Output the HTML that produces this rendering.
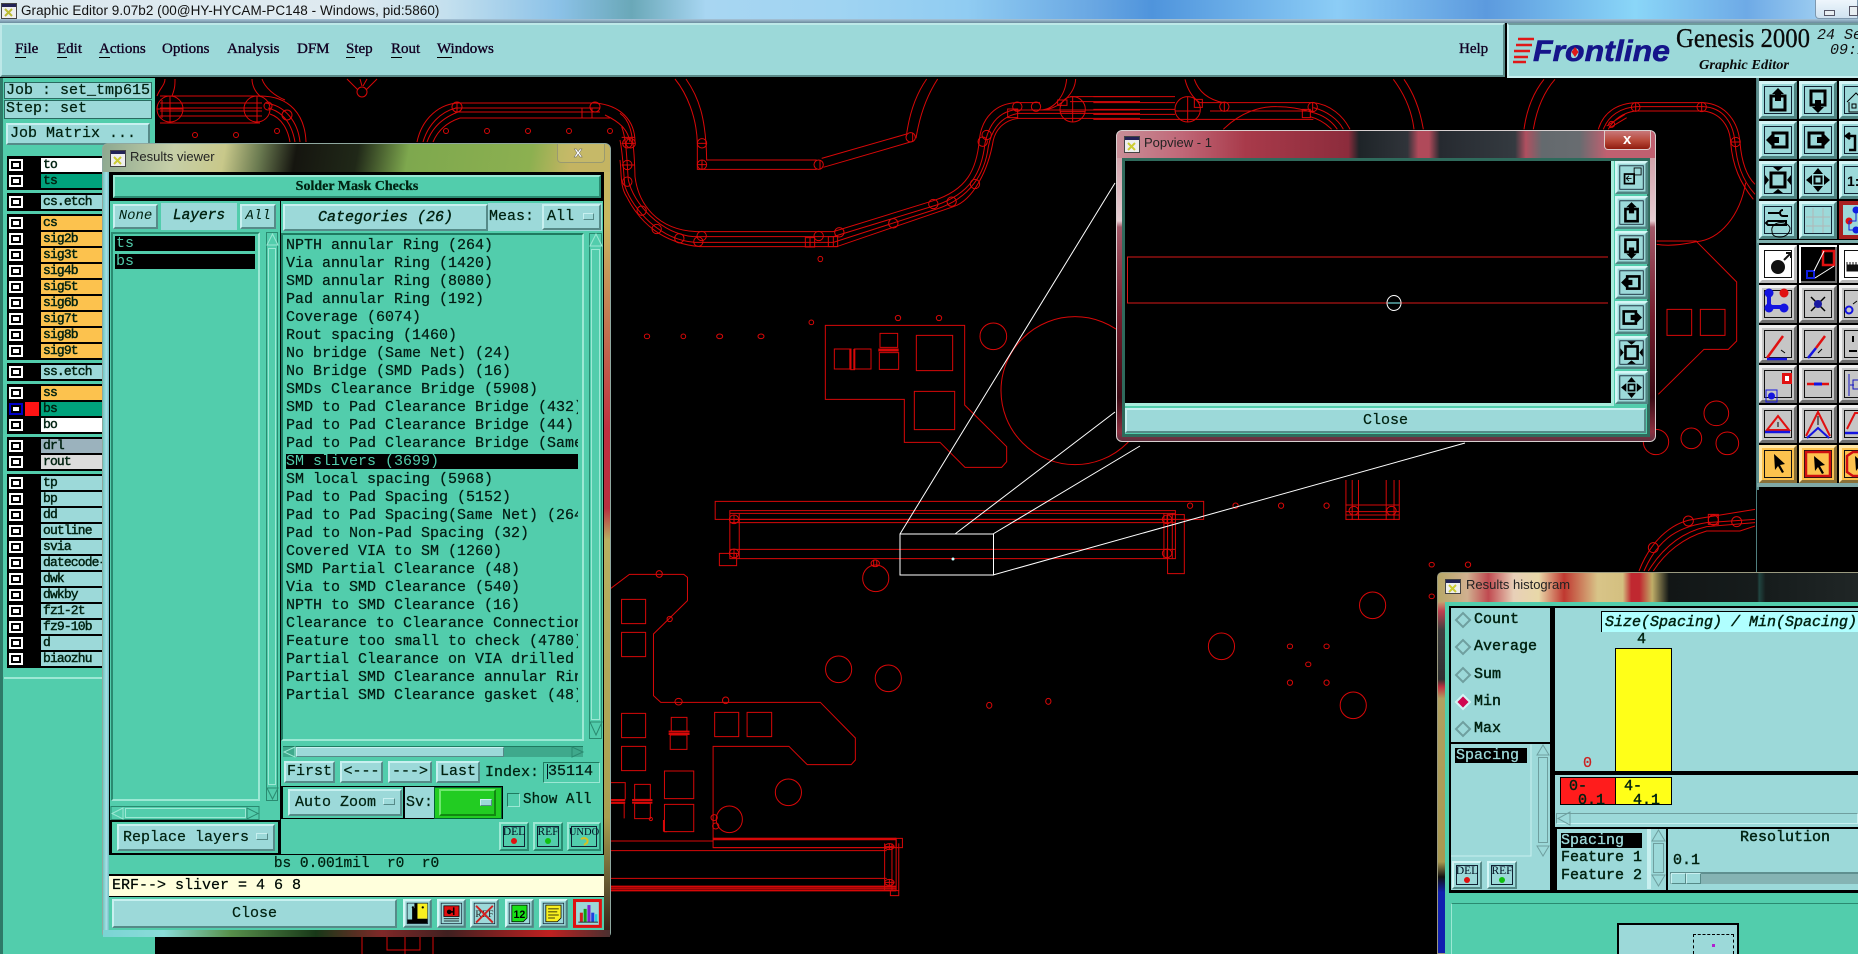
<!DOCTYPE html>
<html><head><meta charset="utf-8"><title>Graphic Editor</title>
<style>
html,body{margin:0;padding:0;width:1858px;height:954px;overflow:hidden;background:#000}
body{position:relative;font-family:"Liberation Mono",monospace;font-size:15px;color:#021;-webkit-text-stroke:.25px #021}
div{position:absolute;box-sizing:border-box;white-space:pre}
.bv{background:#9cd9d9;border:2px solid;border-color:#c8f0f0 #568a88 #568a88 #c8f0f0;text-align:center}
.gb{background:#52cdac;border:2px solid;border-color:#9ce8d4 #2a8a70 #2a8a70 #9ce8d4;text-align:center}
.t{background:#9cd9d9}
.g{background:#52cdac}
.k{background:#000}
.sn{font-family:"Liberation Sans",sans-serif;font-size:13px;color:#111;-webkit-text-stroke:0}
.sf{font-family:"Liberation Serif",serif}
.m{font-family:"Liberation Serif",serif;top:41px;font-size:15px;line-height:17px;color:#102;-webkit-text-stroke:.35px #102}
.r{left:41px;width:61px;height:14px;font:13px/14px "Liberation Mono",monospace;padding-left:2px;letter-spacing:-.85px;overflow:hidden;color:#021;background:#9cd9d9;-webkit-text-stroke:.45px #021}
.o{background:#fcc24e}
.c{left:9px;width:14px;height:12px;background:#000;border:2px solid #fff}
.c:after{content:"";position:absolute;left:2px;top:2px;width:6px;height:4px;background:#fff}
.h{line-height:18px;-webkit-text-stroke:.45px #021}
svg{position:absolute;left:0;top:0;-webkit-text-stroke:0}
svg.b *{vector-effect:non-scaling-stroke}
</style></head><body>

<!-- board -->
<svg class="b" width="1858" height="954" viewBox="0 0 1858 954" fill="none" stroke="#d80808" stroke-width="1">
<g>
<circle cx="170" cy="109" r="13"/><path d="M170 96V123M157 109H183M162 100V118"/>
<circle cx="257" cy="109" r="13"/><path d="M257 96V123"/>
<path d="M160 96H260M160 103H262M160 108H262M160 111H262M160 116H262M160 123H260"/>
<path d="M157 96C160 88 165 85 165 79M172 96C175 88 175 85 175 79M252 79C252 85 255 92 260 96M262 79C265 88 275 96 285 100"/>
<path d="M260 96C290 96 305 115 306 142M265 103C285 105 298 122 300 142M268 108C284 112 292 125 295 142M270 114C282 118 288 130 290 142"/>
<circle cx="268" cy="106" r="4"/><circle cx="287" cy="115" r="5"/>
<path d="M347 79L358 90M377 79L366 90M360 79L362 86M367 79L363 86"/><circle cx="362" cy="92" r="5"/>
<circle cx="195" cy="135" r="2.5"/><circle cx="236" cy="135" r="2.5"/><circle cx="277" cy="131" r="2.5"/>
<path d="M417 142C422 118 440 103 460 103H595C620 105 635 120 635 142M423 142C428 125 440 112 456 108M427 142C432 128 442 118 458 112M433 142C438 130 448 122 460 118"/>
<path d="M455 108H600M455 112H600M460 118H600M590 118H610"/>
<circle cx="457" cy="107" r="5"/><path d="M457 102V112"/><circle cx="595" cy="107" r="5"/><rect x="582" y="108" width="10" height="10"/>
<circle cx="446" cy="131" r="2.5"/><circle cx="487" cy="131" r="2.5"/><circle cx="528" cy="131" r="2.5"/><circle cx="569" cy="131" r="2.5"/><circle cx="610" cy="131" r="2.5"/>
<path d="M605 115C620 122 628 130 630 142"/>
</g>
<g transform="translate(620,60) scale(.33333)">
<path d="M165 57C200 100 230 170 232 250V328H590M198 57C235 110 258 170 260 300H590M605 295L860 222M610 322L875 245M860 222C870 150 890 100 920 57M888 235C900 160 925 100 953 57"/>
<circle cx="246" cy="314" r="14"/><path d="M246 300V328M232 314H260"/><circle cx="596" cy="314" r="14"/><path d="M600 300V328"/><circle cx="872" cy="232" r="14"/><path d="M878 218V246"/><circle cx="246" cy="250" r="14"/><path d="M232 250H260"/>
<path d="M0 160C30 180 42 220 45 350C55 430 110 510 230 515H640L940 422C1040 390 1070 330 1078 240C1085 170 1130 130 1190 128H1260"/>
<path d="M5 200C20 240 20 300 25 360C40 430 120 520 220 530H640L950 435C1050 400 1085 340 1095 250C1105 200 1130 160 1180 150H1560"/>
<path d="M0 240C10 290 10 340 15 380C40 450 120 540 225 547H640L950 447C1050 415 1095 340 1105 260C1115 210 1140 170 1195 160H1560"/>
<path d="M0 300C5 340 0 380 20 410C60 490 130 550 240 560H650L1000 440C1060 420 1105 330 1120 240C1130 200 1160 180 1195 175H1560"/>
<path d="M1350 110H1560M1350 125H1560"/>
<path d="M1260 150C1300 150 1335 110 1340 57M1270 150C1320 145 1365 100 1367 57"/>
<rect x="1313" y="120" width="28" height="16"/>
<circle cx="1358" cy="148" r="38"/><path d="M1358 110V186M1320 155H1396"/>
<g><circle cx="22" cy="250" r="14"/><circle cx="32" cy="250" r="14"/><path d="M5 250H45M5 232H45"/><circle cx="22" cy="315" r="14"/><path d="M5 315H45"/><circle cx="22" cy="365" r="14"/><circle cx="65" cy="452" r="14"/><circle cx="110" cy="507" r="14"/><circle cx="178" cy="535" r="14"/><circle cx="245" cy="528" r="14"/><circle cx="235" cy="545" r="14"/><circle cx="596" cy="528" r="14"/><circle cx="658" cy="517" r="14"/><rect x="625" y="530" width="28" height="30"/><path d="M640 530V560"/><circle cx="820" cy="490" r="14"/><circle cx="940" cy="432" r="14"/><circle cx="995" cy="425" r="14"/><circle cx="1065" cy="372" r="14"/><circle cx="1088" cy="245" r="14"/><circle cx="1100" cy="225" r="14"/><circle cx="1192" cy="140" r="14"/><circle cx="1248" cy="140" r="14"/><rect x="1163" y="147" width="30" height="26"/><rect x="556" y="533" width="28" height="28"/><path d="M570 533V561"/></g>
<ellipse cx="601" cy="597" rx="7" ry="8"/><ellipse cx="81" cy="829" rx="8" ry="7"/><ellipse cx="190" cy="829" rx="7" ry="7"/><ellipse cx="299" cy="829" rx="9" ry="7"/><ellipse cx="423" cy="829" rx="9" ry="7"/><ellipse cx="574" cy="787" rx="7" ry="7"/><ellipse cx="834" cy="774" rx="8" ry="8"/><ellipse cx="957" cy="774" rx="8" ry="8"/>
<path d="M616 796H1034V1035L1160 1160V1205L1145 1222H1035L960 1147H853V1018H616Z"/>
<rect x="643" y="867" width="50" height="60"/><rect x="703" y="867" width="50" height="60"/><path d="M691 867V929M703 867V929" stroke-width="2"/><path d="M691 929H705"/>
<rect x="780" y="820" width="53" height="42"/><rect x="778" y="878" width="58" height="50"/><path d="M775 870H836" stroke-width="3"/>
<rect x="889" y="826" width="109" height="106"/><rect x="883" y="994" width="121" height="115"/>
<circle cx="1120" cy="829" r="40"/><circle cx="1365" cy="992" r="222"/>
</g>
<g transform="translate(620,480) scale(.523,.33333)">
<rect x="182" y="64" width="934" height="54"/><rect x="210" y="92" width="852" height="144"/>
<path d="M210 100H1062M210 118H1062M210 128H1062M210 208H1062M228 100V236M1040 100V236M1056 100V236"/>
<ellipse cx="218" cy="118" rx="9" ry="13"/><path d="M218 105V131"/><ellipse cx="218" cy="220" rx="9" ry="13"/><path d="M218 207V233M209 220H228"/><ellipse cx="1046" cy="118" rx="9" ry="13"/><path d="M1046 105V131"/><ellipse cx="1046" cy="220" rx="9" ry="13"/><path d="M1046 207V233"/>
<rect x="190" y="220" width="33" height="37"/><rect x="1047" y="104" width="32" height="177"/>
<ellipse cx="488" cy="250" rx="8" ry="10"/><path d="M485 240V260M491 240V260"/><ellipse cx="489" cy="295" rx="25" ry="40"/>
<ellipse cx="1090" cy="77" rx="5" ry="8"/><ellipse cx="1177" cy="77" rx="5" ry="8"/><ellipse cx="1264" cy="77" rx="5" ry="8"/><ellipse cx="1351" cy="77" rx="5" ry="8"/>
<path d="M-30 340L18 283H122L129 292V362L64 462V647L78 667H383L450 774V840L442 854H358L323 799H178V1075"/>
<rect x="3" y="358" width="46" height="73"/><rect x="3" y="457" width="46" height="73"/><rect x="3" y="700" width="46" height="73"/><rect x="3" y="799" width="46" height="73"/><rect x="181" y="697" width="46" height="73"/><rect x="243" y="697" width="47" height="73"/>
<rect x="98" y="712" width="30" height="42"/><rect x="96" y="765" width="32" height="43"/><path d="M93 755H133M93 762H133" stroke-width="2"/>
<rect x="85" y="873" width="56" height="83"/><rect x="85" y="973" width="56" height="82"/><rect x="28" y="913" width="30" height="45"/><rect x="28" y="970" width="30" height="46"/><path d="M23 960H62M23 968H62" stroke-width="2"/><path d="M-30 908H10V958M-30 970H8V1015"/><path d="M-30 960H10M-30 968H10" stroke-width="2"/>
<ellipse cx="75" cy="282" rx="6" ry="10"/><ellipse cx="112" cy="665" rx="7" ry="10"/><ellipse cx="202" cy="661" rx="6" ry="10"/><ellipse cx="95" cy="417" rx="5" ry="8"/>
<ellipse cx="418" cy="568" rx="25" ry="40"/><ellipse cx="513" cy="595" rx="25" ry="40"/><ellipse cx="322" cy="937" rx="25" ry="40"/><ellipse cx="209" cy="1018" rx="25" ry="40"/><ellipse cx="1150" cy="499" rx="25" ry="40"/><ellipse cx="1439" cy="376" rx="25" ry="40"/><ellipse cx="1402" cy="676" rx="25" ry="40"/>
<ellipse cx="706" cy="676" rx="5" ry="9"/><ellipse cx="819" cy="664" rx="5" ry="9"/><ellipse cx="1281" cy="499" rx="5" ry="7"/><ellipse cx="1351" cy="499" rx="5" ry="7"/><ellipse cx="1316" cy="553" rx="5" ry="7"/><ellipse cx="1281" cy="608" rx="5" ry="8"/><ellipse cx="1351" cy="608" rx="5" ry="8"/><ellipse cx="1552" cy="254" rx="5" ry="7"/><ellipse cx="1552" cy="349" rx="5" ry="7"/>
<path d="M-30 1083H178M178 1103H528M-30 1112H510M-30 1195H510M506 1090V1232M520 1090V1232M528 1090V1232M533 1090V1232"/>
<rect x="178" y="1075" width="350" height="28"/><path d="M178 1077H528" stroke-width="2.5"/><path d="M-30 1220H528M-30 1231H528" stroke-width="2"/><path d="M-30 1225H528"/>
<rect x="528" y="1075" width="12" height="28"/><rect x="517" y="1232" width="16" height="15"/><circle cx="515" cy="1100" r="9"/><circle cx="515" cy="1207" r="9"/><path d="M506 1100H525M515 1090V1110M506 1207H525M515 1197V1217"/>
<ellipse cx="59" cy="1017" rx="3" ry="5"/><ellipse cx="180" cy="1013" rx="6" ry="9"/><ellipse cx="183" cy="1038" rx="6" ry="9"/><path d="M84 1020V1055" stroke-width="2"/><path d="M84 1055H90"/>
<path d="M1388 0V120M1400 0V120M1412 0V120M1465 0V120M1480 0V120M1490 0V120M1387 75H1490M1387 95H1490M1387 105H1490M1387 118H1490"/><ellipse cx="1403" cy="92" rx="9" ry="13"/><ellipse cx="1475" cy="92" rx="9" ry="13"/>
</g>
<g transform="translate(1100,76) scale(.33333)">
<path d="M-20 62H225M-20 80H225M-20 100H225M-20 115H225M-20 130H640M300 80H640M330 105H640"/>
<circle cx="263" cy="100" r="38"/><path d="M263 62V138M225 105H300"/><rect x="283" y="70" width="24" height="24"/>
<path d="M255 10C265 50 285 70 300 80M283 10C295 45 320 70 370 80"/><circle cx="373" cy="92" r="14"/><path d="M373 78V106"/><circle cx="638" cy="93" r="14"/><path d="M638 79V107"/><rect x="607" y="100" width="24" height="25"/>
<path d="M640 80C690 85 730 120 750 160M640 95C680 105 715 130 730 160M640 110C670 118 695 135 712 160M630 122C660 130 680 145 695 160"/>
<path d="M370 160C420 110 480 90 530 92C570 92 610 100 640 110"/>
<path d="M880 10C910 50 935 100 942 160M912 10C940 50 960 100 970 160M1332 10C1300 50 1280 100 1272 160M1365 10C1330 50 1310 100 1300 160"/>
</g>
<g transform="translate(1440,76) scale(.33333)">
<path d="M475 160C490 110 530 82 590 80H790C860 85 895 140 900 200C905 260 920 300 945 325M490 160C505 120 540 95 590 92H790C850 95 880 140 885 200C890 260 905 310 945 355M505 160C520 130 550 110 585 105H790C840 110 870 150 872 200C878 270 900 320 940 370"/>
<circle cx="587" cy="93" r="13"/><path d="M587 80V106"/><circle cx="785" cy="93" r="14"/><path d="M785 79V107"/><circle cx="887" cy="198" r="14"/><path d="M873 198H901"/><path d="M500 150L555 115M510 155L560 125"/><circle cx="515" cy="145" r="9"/>
<path d="M917 320C900 420 840 490 770 497C720 508 680 510 650 505M650 495H770"/>
<path d="M770 497L890 618V795L865 820H792L655 955"/>
<rect x="681" y="700" width="74" height="78"/><rect x="781" y="700" width="74" height="78"/>
<circle cx="829" cy="1012" r="37"/><circle cx="754" cy="1087" r="31"/><circle cx="862" cy="1102" r="34"/><circle cx="648" cy="1098" r="38"/>
<path d="M597 1485C630 1400 690 1340 760 1330L945 1300M612 1485C650 1400 700 1355 800 1340L945 1330M625 1485C665 1420 720 1370 800 1352L945 1340M640 1485C675 1430 730 1385 800 1365H900L945 1350"/>
<circle cx="640" cy="1415" r="15"/><circle cx="745" cy="1335" r="15"/><circle cx="820" cy="1332" r="15"/><circle cx="890" cy="1337" r="15"/><rect x="805" y="1315" width="30" height="30"/>
<circle cx="84" cy="1466" r="8"/>
</g>
<path d="M362 937V954M387 937V950H405M405 937V954M405 950H420V937M433 937V954"/>
<g stroke="#fff"><path d="M900 534L1115 183M955 534L1115 412M993 534L1140 446M993 575L1465 443"/><rect x="900" y="534" width="93.5" height="41"/></g>
<circle cx="953" cy="559" r="1.5" fill="#cff" stroke="none"/>
</svg>

<!-- os title -->
<div style="left:0;top:0;width:1858px;height:23px;background:linear-gradient(90deg,#dce9ef 0,#dfeaf0 19%,#c4e0ee 24%,#8cc2e8 30%,#6aa8b8 34%,#a8d6f2 38%,#a0d4f2 45%,#90ccf2 52%,#68a6e2 59%,#4f94dc 62%,#8ccdf6 72%,#5c9ade 80%,#8ad6f8 88%,#6eaae6 94%,#b4def6 100%)"></div>
<div style="left:0;top:19px;width:1858px;height:4px;background:linear-gradient(#a8c4d8,#6a8a9c)"></div>
<div class="sn" style="left:21px;top:3px;line-height:16px;font-size:13.5px;letter-spacing:.05px">Graphic Editor 9.07b2 (00@HY-HYCAM-PC148 - Windows, pid:5860)</div>
<div style="left:1815px;top:0;width:43px;height:19px;background:linear-gradient(#eef6fc,#cfe2f0);border:1px solid #7e98ae;border-top:0;border-radius:0 0 0 4px"></div>
<div style="left:1824px;top:10px;width:11px;height:6px;background:#e8eef2;border:1px solid #556"></div>
<div style="left:1849px;top:6px;width:9px;height:10px;background:#e8eef2;border:1px solid #556"></div>
<svg width="16" height="17" style="left:1px;top:3px"><rect x=".5" y=".5" width="15" height="15" fill="#eee" stroke="#444"/><rect x="1" y="1" width="14" height="3" fill="#225"/><path d="M4 6l7 7M11 6l-7 7" stroke="#bb3" stroke-width="2"/></svg>

<!-- menu -->
<div class="t" style="left:0;top:23px;width:1505px;height:54px;border:2px solid;border-color:#bde8e8 #5a8a88 #5a8a88 #bde8e8"></div>
<div class="t" style="left:1507px;top:23px;width:351px;height:55px;border-left:2px solid #c8f0f0;border-bottom:2px solid #c8f0f0;border-top:2px solid #6f9c9c"></div>
<div class="m" style="left:15px">File</div>
<div class="m" style="left:57px">Edit</div>
<div class="m" style="left:99px">Actions</div>
<div class="m" style="left:162px">Options</div>
<div class="m" style="left:227px">Analysis</div>
<div class="m" style="left:297px">DFM</div>
<div class="m" style="left:346px">Step</div>
<div class="m" style="left:391px">Rout</div>
<div class="m" style="left:437px">Windows</div>
<div class="m" style="left:1459px">Help</div>
<div class="k" style="left:15px;top:57px;width:11px;height:1px"></div><div class="k" style="left:57px;top:57px;width:10px;height:1px"></div><div class="k" style="left:99px;top:57px;width:11px;height:1px"></div><div class="k" style="left:346px;top:57px;width:9px;height:1px"></div><div class="k" style="left:391px;top:57px;width:11px;height:1px"></div><div class="k" style="left:437px;top:57px;width:15px;height:1px"></div>

<!-- logo -->
<svg width="1858" height="80" style="left:0;top:0">
<g stroke="#e01818" stroke-width="2.5"><path d="M1518 39H1534M1516 45H1532M1514 51H1530M1514 57H1528M1513 62H1526"/></g>
<text x="1533" y="61" font-family="Liberation Sans" font-weight="bold" font-style="italic" font-size="30" fill="#15158a" stroke="#15158a" stroke-width=".6" textLength="137" lengthAdjust="spacingAndGlyphs">Frontline</text>
<path d="M1575 47l3.500 5-3.500 5-3.500-5z" fill="#e01818"/>
<text x="1676" y="47" font-family="Liberation Serif" font-size="27" fill="#0a0a0a" stroke="#0a0a0a" stroke-width=".3" textLength="134" lengthAdjust="spacingAndGlyphs">Genesis 2000</text>
<text x="1699" y="69" font-family="Liberation Serif" font-weight="bold" font-style="italic" font-size="14" fill="#0a0a0a" textLength="90" lengthAdjust="spacingAndGlyphs">Graphic Editor</text>
<text x="1817" y="39" font-family="Liberation Mono" font-style="italic" font-size="15" fill="#111">24 Sep</text>
<text x="1830" y="54" font-family="Liberation Mono" font-style="italic" font-size="15" fill="#111">09:11</text>
</svg>

<!-- left panel -->
<div class="g" style="left:0;top:78px;width:155px;height:876px"></div>
<div style="left:0;top:78px;width:3px;height:876px;background:#2e7a68"></div>
<div class="t" style="left:4px;top:82px;width:148px;height:17px;border:1px solid #2a6a60;line-height:15px;padding-left:1px">Job : set_tmp615</div>
<div class="t" style="left:4px;top:100px;width:148px;height:19px;border:1px solid #2a6a60;line-height:16px;padding-left:1px">Step: set</div>
<div class="bv" style="left:6px;top:123px;width:144px;height:22px;line-height:18px;text-align:left;padding-left:2px">Job Matrix ...</div>

<div class="k" style="left:7px;top:156px;width:95px;height:34px"></div>
<div class="k" style="left:7px;top:193px;width:95px;height:18px"></div>
<div class="k" style="left:7px;top:214px;width:95px;height:146px"></div>
<div class="k" style="left:7px;top:363px;width:95px;height:18px"></div>
<div class="k" style="left:7px;top:384px;width:95px;height:50px"></div>
<div class="k" style="left:7px;top:437px;width:95px;height:34px"></div>
<div class="k" style="left:7px;top:474px;width:95px;height:194px"></div>
<div style="left:4px;top:677px;width:100px;height:2px;background:#9ce8d4"></div>

<div class="c" style="top:159px"></div><div class="r" style="top:158px;background:#fff">to</div>
<div class="c" style="top:175px"></div><div class="r" style="top:174px;background:#00a27c">ts</div>
<div class="c" style="top:196px"></div><div class="r" style="top:195px">cs.etch</div>
<div class="c" style="top:217px"></div><div class="r o" style="top:216px">cs</div>
<div class="c" style="top:233px"></div><div class="r o" style="top:232px">sig2b</div>
<div class="c" style="top:249px"></div><div class="r o" style="top:248px">sig3t</div>
<div class="c" style="top:265px"></div><div class="r o" style="top:264px">sig4b</div>
<div class="c" style="top:281px"></div><div class="r o" style="top:280px">sig5t</div>
<div class="c" style="top:297px"></div><div class="r o" style="top:296px">sig6b</div>
<div class="c" style="top:313px"></div><div class="r o" style="top:312px">sig7t</div>
<div class="c" style="top:329px"></div><div class="r o" style="top:328px">sig8b</div>
<div class="c" style="top:345px"></div><div class="r o" style="top:344px">sig9t</div>
<div class="c" style="top:366px"></div><div class="r" style="top:365px">ss.etch</div>
<div class="c" style="top:387px"></div><div class="r o" style="top:386px">ss</div>
<div class="c" style="top:403px;border-color:#0000c8"></div><div style="left:25px;top:402px;width:14px;height:14px;background:#ff1414"></div><div class="r" style="top:402px;background:#00a27c">bs</div>
<div class="c" style="top:419px"></div><div class="r" style="top:418px;background:#fff">bo</div>
<div class="c" style="top:440px"></div><div class="r" style="top:439px;background:#9bb2bd">drl</div>
<div class="c" style="top:456px"></div><div class="r" style="top:455px;background:#dcdcdc">rout</div>
<div class="c" style="top:477px"></div><div class="r" style="top:476px">tp</div>
<div class="c" style="top:493px"></div><div class="r" style="top:492px">bp</div>
<div class="c" style="top:509px"></div><div class="r" style="top:508px">dd</div>
<div class="c" style="top:525px"></div><div class="r" style="top:524px">outline</div>
<div class="c" style="top:541px"></div><div class="r" style="top:540px">svia</div>
<div class="c" style="top:557px"></div><div class="r" style="top:556px">datecode-</div>
<div class="c" style="top:573px"></div><div class="r" style="top:572px">dwk</div>
<div class="c" style="top:589px"></div><div class="r" style="top:588px">dwkby</div>
<div class="c" style="top:605px"></div><div class="r" style="top:604px">fz1-2t</div>
<div class="c" style="top:621px"></div><div class="r" style="top:620px">fz9-10b</div>
<div class="c" style="top:637px"></div><div class="r" style="top:636px">d</div>
<div class="c" style="top:653px"></div><div class="r" style="top:652px">biaozhu</div>

<!-- RESULTS VIEWER -->
<div style="left:102px;top:143px;width:509px;height:794px;border-radius:6px 6px 4px 4px;border:1px solid #8fa8a0;background:linear-gradient(180deg,#c8b860 0,#c8b860 10%,#c03040 36%,#b83040 46%,#b8b060 50%,#a8a050 85%,#302018 100%)"></div>
<div style="left:103px;top:172px;width:7px;height:764px;background:linear-gradient(90deg,#6fc8c0,#a8e0e8,#58b0b0)"></div>
<div style="left:103px;top:144px;width:507px;height:28px;border-radius:5px 5px 0 0;background:linear-gradient(100deg,#8da890 0,#c6cfa8 14%,#c8c88a 24%,#6a7a50 31%,#15150f 38%,#202818 50%,#7ea84e 60%,#8cb050 84%,#c4b462 92%,#c4b462 100%)"></div>
<div style="left:103px;top:930px;width:507px;height:7px;background:linear-gradient(90deg,#7bd4d4 0,#8adcd8 12%,#58904c 25%,#183818 42%,#802828 55%,#402020 68%,#c02020 88%,#4a3030 100%)"></div>
<div style="left:557px;top:144px;width:48px;height:19px;border:1px solid #9a9a70;border-top:0;border-radius:0 0 4px 4px;background:rgba(200,190,110,.55)"></div>
<div style="left:574px;top:144px;font:bold 15px/18px 'Liberation Sans',sans-serif;color:#fff;-webkit-text-stroke:.4px #555">x</div>
<svg width="16" height="18" style="left:110px;top:150px"><rect x=".5" y=".5" width="15" height="16" fill="#eee" stroke="#444"/><rect x="1" y="1" width="14" height="3" fill="#225"/><path d="M4 7l7 7M11 7l-7 7" stroke="#cc3" stroke-width="2"/></svg>
<div class="sn" style="left:130px;top:148px;line-height:18px;font-size:13px;color:#222">Results viewer</div>

<div class="k" style="left:109px;top:172px;width:495px;height:758px"></div>
<div class="gb" style="left:113px;top:175px;width:488px;height:23px;font:bold 14px/19px 'Liberation Serif',serif">Solder Mask Checks</div>
<div class="g" style="left:110px;top:201px;width:170px;height:620px"></div>
<div class="g" style="left:281px;top:201px;width:322px;height:619px"></div>

<div class="t" style="left:161px;top:203px;width:76px;height:27px;font:italic 14.5px/27px 'Liberation Mono',monospace;text-align:center;-webkit-text-stroke:.4px #021">Layers</div>
<div class="bv" style="left:113px;top:204px;width:45px;height:25px;font:italic 14px/21px 'Liberation Mono',monospace;-webkit-text-stroke:0">None</div>
<div class="bv" style="left:240px;top:204px;width:36px;height:25px;font:italic 14px/21px 'Liberation Mono',monospace;-webkit-text-stroke:0">All</div>
<div class="bv" style="left:283px;top:204px;width:205px;height:27px;font:italic 15px/23px 'Liberation Mono',monospace;-webkit-text-stroke:.4px #021">Categories (26)</div>
<div class="t" style="left:488px;top:203px;width:114px;height:28px;line-height:28px;padding-left:1px">Meas:</div>
<div class="bv" style="left:542px;top:204px;width:59px;height:26px;line-height:22px;text-align:left;padding-left:3px">All</div>
<div class="bv" style="left:583px;top:213px;width:11px;height:7px;border-width:1px"></div>

<!-- lists -->
<div class="g" style="left:111px;top:232px;width:149px;height:569px;border:2px solid;border-color:#2a8a70 #9ce8d4 #9ce8d4 #2a8a70"></div>
<div class="k" style="left:115px;top:236px;width:140px;height:15px;color:#52cdac;line-height:15px;padding-left:1px;-webkit-text-stroke:0">ts</div>
<div class="k" style="left:115px;top:254px;width:140px;height:15px;color:#52cdac;line-height:15px;padding-left:1px;-webkit-text-stroke:0">bs</div>

<div class="g" style="left:281px;top:233px;width:303px;height:508px;border:2px solid;border-color:#1f7a60 #9ce8d4 #9ce8d4 #1f7a60"></div>
<div class="k" style="left:286px;top:454px;width:292px;height:15px"></div>
<div style="left:286px;top:237px;width:292px;height:480px;overflow:hidden;line-height:18px;font-size:15px;color:#041a14">NPTH annular Ring (264)
Via annular Ring (1420)
SMD annular Ring (8080)
Pad annular Ring (192)
Coverage (6074)
Rout spacing (1460)
No bridge (Same Net) (24)
No Bridge (SMD Pads) (16)
SMDs Clearance Bridge (5908)
SMD to Pad Clearance Bridge (432)
Pad to Pad Clearance Bridge (44)
Pad to Pad Clearance Bridge (Same
<span style="color:#52cdac;-webkit-text-stroke:0">SM slivers (3699)</span>
SM local spacing (5968)
Pad to Pad Spacing (5152)
Pad to Pad Spacing(Same Net) (264
Pad to Non-Pad Spacing (32)
Covered VIA to SM (1260)
SMD Partial Clearance (48)
Via to SMD Clearance (540)
NPTH to SMD Clearance (16)
Clearance to Clearance Connection
Feature too small to check (4780)
Partial Clearance on VIA drilled
Partial SMD Clearance annular Rin
Partial SMD Clearance gasket (48)</div>

<!-- h scroll etc -->
<div style="left:283px;top:746px;width:300px;height:11px;background:#3fa98c;border-top:1px solid #1f7a60"></div>
<div class="t" style="left:296px;top:747px;width:208px;height:10px;border:1px solid;border-color:#c8f0f0 #568a88 #568a88 #c8f0f0"></div>
<div class="bv" style="left:284px;top:761px;width:51px;height:22px;line-height:18px">First</div>
<div class="bv" style="left:340px;top:761px;width:43px;height:22px;line-height:18px">&lt;---</div>
<div class="bv" style="left:388px;top:761px;width:44px;height:22px;line-height:18px">---&gt;</div>
<div class="bv" style="left:436px;top:761px;width:44px;height:22px;line-height:18px">Last</div>
<div style="left:485px;top:763px;line-height:20px">Index:</div>
<div class="g" style="left:543px;top:762px;width:57px;height:21px;border:1px solid;border-color:#1f7a60 #9ce8d4 #9ce8d4 #1f7a60;line-height:17px;padding-left:4px;color:#041a14">35114</div>
<div style="left:547px;top:764px;width:1px;height:15px;background:#012"></div>

<div class="k" style="left:281px;top:786px;width:222px;height:33px"></div>
<div class="g" style="left:283px;top:787px;width:120px;height:31px"></div>
<div class="bv" style="left:288px;top:789px;width:114px;height:27px;text-align:left;padding-left:5px;line-height:23px">Auto Zoom</div>
<div class="bv" style="left:383px;top:798px;width:12px;height:7px;border-width:1px"></div>
<div class="t" style="left:405px;top:787px;width:29px;height:31px;line-height:31px;padding-left:1px">Sv:</div>
<div style="left:434px;top:787px;width:68px;height:32px;background:#22cc22;border:1px solid #063"></div>
<div style="left:439px;top:789px;width:57px;height:27px;background:#22cc22;border:2px solid;border-color:#6ee86e #118811 #118811 #6ee86e"></div>
<div class="bv" style="left:480px;top:799px;width:12px;height:7px;border-width:1px"></div>
<div style="left:507px;top:793px;width:13px;height:14px;border:1px solid;border-color:#1f7a60 #9ce8d4 #9ce8d4 #1f7a60"></div>
<div style="left:523px;top:790px;line-height:20px;font-size:14.3px">Show All</div>

<div class="k" style="left:110px;top:820px;width:170px;height:34px"></div>
<div class="g" style="left:112px;top:822px;width:166px;height:31px"></div>
<div class="bv" style="left:117px;top:824px;width:158px;height:27px;text-align:left;padding-left:4px;line-height:23px">Replace layers</div>
<div class="bv" style="left:256px;top:833px;width:12px;height:7px;border-width:1px"></div>
<div class="g" style="left:281px;top:819px;width:322px;height:35px"></div>

<div class="g" style="left:109px;top:855px;width:495px;height:19px;line-height:19px;text-align:center;font-size:14.5px">bs 0.001mil  r0  r0</div>
<div style="left:109px;top:876px;width:495px;height:20px;background:#ffffdc;line-height:20px;padding-left:3px;color:#000">ERF--&gt; sliver = 4 6 8</div>
<div class="g" style="left:109px;top:897px;width:495px;height:33px"></div>
<div class="bv" style="left:112px;top:899px;width:285px;height:29px;line-height:25px">Close</div>

<!-- Popview -->
<div style="left:1116px;top:130px;width:540px;height:312px;border-radius:6px;border:1px solid #d8d0d0;background:linear-gradient(180deg,#c8909a 0,#e6cdd2 29%,#a25868 31%,#741c2c 60%,#3a0a14 86%,#8a3040 97%,#603040 100%)"></div>
<div style="left:1117px;top:131px;width:538px;height:27px;border-radius:5px 5px 0 0;background:linear-gradient(90deg,#c88f98 0,#c06878 12%,#a83a4a 24%,#8c2c3c 43%,#1e2428 45%,#30343a 54%,#b04a5a 56%,#b04a5a 58%,#262a30 60%,#343a40 74%,#b05060 76%,#646a6e 79%,#686c70 86%,#c06070 91%,#c06070 100%)"></div>
<div style="left:1604px;top:131px;width:47px;height:19px;border:1px solid #dcc;border-top:0;border-radius:0 0 4px 4px;background:linear-gradient(#c8787a 0,#b84838 55%,#901c10 100%)"></div>
<div style="left:1623px;top:131px;font:bold 15px/18px 'Liberation Sans',sans-serif;color:#fff;-webkit-text-stroke:0">x</div>
<svg width="16" height="18" style="left:1124px;top:136px"><rect x=".5" y=".5" width="15" height="16" fill="#eee" stroke="#444"/><rect x="1" y="1" width="14" height="3" fill="#225"/><path d="M4 7l7 7M11 7l-7 7" stroke="#cc3" stroke-width="2"/></svg>
<div class="sn" style="left:1144px;top:134px;line-height:18px;color:#222">Popview - 1</div>
<div style="left:1122px;top:158px;width:528px;height:279px;background:#52cdac;border:3px solid #2f6a5c"></div>
<div class="k" style="left:1125px;top:161px;width:486px;height:242px"></div>
<div style="left:1611px;top:161px;width:3px;height:244px;background:#a8ecdc"></div>
<div style="left:1125px;top:403px;width:489px;height:3px;background:#a8ecdc"></div>
<svg width="1858" height="954" style="left:0;top:0;pointer-events:none" fill="none">
<path d="M1608 257H1127.500V303H1608" stroke="#d81818"/><ellipse cx="1394" cy="303" rx="7" ry="7.500" stroke="#fff"/><path d="M1388 303H1400" stroke="#8ff"/>
</svg>
<div class="bv" style="left:1125px;top:408px;width:521px;height:25px;line-height:21px">Close</div>

<!-- Histogram -->
<div style="left:1437px;top:572px;width:421px;height:382px;border-radius:5px 0 0 0;border:1px solid #9a9a80;background:linear-gradient(180deg,#c8b878 0,#c8b878 7%,#c04050 10%,#404040 15%,#303030 28%,#c03040 30%,#b0a060 33%,#a89850 76%,#101010 80%,#1020b0 84%,#1020b0 100%)"></div>
<div style="left:1438px;top:573px;width:420px;height:29px;border-radius:4px 0 0 0;background:linear-gradient(90deg,#b8a868 0,#d0b090 7%,#c04a50 12%,#e8d0b8 18%,#e8d8a8 24%,#c03830 30%,#d8c488 38%,#d4c080 44%,#c02830 46%,#c02830 48%,#c0ae68 51%,#121616 55%,#161c1c 76%,#204440 76.500%,#161c1c 78%,#202626 100%)"></div>
<svg width="16" height="16" style="left:1445px;top:579px"><rect x=".5" y=".5" width="15" height="14" fill="#eee" stroke="#444"/><rect x="1" y="1" width="14" height="3" fill="#225"/><path d="M4 6l7 7M11 6l-7 7" stroke="#cc3" stroke-width="2"/></svg>
<div class="sn" style="left:1466px;top:576px;line-height:18px;color:#222">Results histogram</div>
<div class="g" style="left:1445px;top:602px;width:413px;height:352px"></div>
<div class="k" style="left:1449px;top:606px;width:409px;height:287px"></div>
<div class="t" style="left:1451px;top:608px;width:99px;height:134px"></div>
<div class="t" style="left:1451px;top:744px;width:99px;height:148px"></div>
<div class="t" style="left:1555px;top:608px;width:303px;height:163px"></div>
<div class="t" style="left:1555px;top:775px;width:303px;height:52px"></div>
<div class="t" style="left:1557px;top:829px;width:301px;height:61px"></div>
<div class="h" style="left:1474px;top:611px">Count</div>
<div class="h" style="left:1474px;top:638px">Average</div>
<div class="h" style="left:1474px;top:666px">Sum</div>
<div class="h" style="left:1474px;top:693px">Min</div>
<div class="h" style="left:1474px;top:720px">Max</div>
<div class="k" style="left:1455px;top:748px;width:72px;height:15px;color:#9cd9d9;line-height:15px;padding-left:1px;-webkit-text-stroke:.3px #9cd9d9">Spacing</div>
<div style="left:1601px;top:611px;width:257px;height:21px;background:#b0ffff;border-left:1px solid #000;border-top:1px solid #000;font:italic 15px/21px 'Liberation Mono',monospace;padding-left:3px;-webkit-text-stroke:.45px #021">Size(Spacing) / Min(Spacing)</div>
<div class="h" style="left:1637px;top:631px">4</div>
<div style="left:1615px;top:648px;width:57px;height:124px;background:#ffff18;border:1px solid #000"></div>
<div class="h" style="left:1583px;top:755px;color:#cc2020;-webkit-text-stroke:.3px #cc2020">0</div>
<div class="k" style="left:1555px;top:771px;width:303px;height:4px"></div>
<div style="left:1560px;top:777px;width:56px;height:28px;background:#ff1c1c;border:1px solid #000"></div>
<div style="left:1615px;top:777px;width:57px;height:28px;background:#ffff18;border:1px solid #000"></div>
<div class="h" style="left:1569px;top:778px;line-height:17px">0-</div>
<div class="h" style="left:1624px;top:778px;line-height:17px">4-</div>
<div class="h" style="left:1578px;top:792px;line-height:17px">0.1</div>
<div class="h" style="left:1633px;top:792px;line-height:17px">4.1</div>
<div class="t" style="left:1555px;top:811px;width:303px;height:16px"></div>
<div class="t" style="left:1556px;top:813px;width:302px;height:11px;border:1px solid;border-color:#6f9f9f #c8f0f0 #c8f0f0 #6f9f9f"></div>
<div class="k" style="left:1555px;top:827px;width:303px;height:2px"></div>
<div class="k" style="left:1561px;top:833px;width:81px;height:15px;color:#9cd9d9;line-height:15px;-webkit-text-stroke:.3px #9cd9d9">Spacing</div>
<div class="h" style="left:1561px;top:849px">Feature 1</div>
<div class="h" style="left:1561px;top:867px">Feature 2</div>
<div class="h" style="left:1740px;top:829px">Resolution</div>
<div class="h" style="left:1673px;top:852px">0.1</div>
<div style="left:1670px;top:872px;width:188px;height:12px;background:#85b3b3;border-top:2px solid #5f8f8f"></div>
<div class="bv" style="left:1671px;top:873px;width:15px;height:11px;border-width:1px"></div>
<div class="bv" style="left:1686px;top:873px;width:15px;height:11px;border-width:1px"></div>
<div class="k" style="left:1449px;top:890px;width:409px;height:2px"></div>
<div style="left:1451px;top:903px;width:407px;height:51px;background:#52cdac;border-left:1px solid #9ce8d4;border-top:1px solid #2a8a70"></div>
<div class="t" style="left:1617px;top:923px;width:122px;height:31px;border:2px solid #000;border-bottom:0"></div>
<div style="left:1693px;top:934px;width:41px;height:20px;border:1px dashed #000;border-bottom:0"></div>
<div style="left:1712px;top:944px;width:3px;height:3px;background:#b020d0"></div>

<!-- Overlay -->
<svg width="1858" height="954" viewBox="0 0 1858 954" style="pointer-events:none">
<defs>
<g id="T"><rect width="38" height="38" fill="#9cd9d9"/><path d="M0 38V0H38L35 3H3V35z" fill="#d4f6f6"/><path d="M38 0V38H0L3 35H35V3z" fill="#4f8482"/><rect x="5.500" y="5.500" width="27" height="27" fill="none" stroke="#123"/></g>
<g id="G"><rect width="38" height="38" fill="#c6c6c6"/><path d="M0 38V0H38L35 3H3V35z" fill="#f0f0f0"/><path d="M38 0V38H0L3 35H35V3z" fill="#6e6e6e"/><rect x="5.500" y="5.500" width="27" height="27" fill="none" stroke="#111"/></g>
<g id="W"><rect width="38" height="38" fill="#fff"/><path d="M38 0V38H0L3 35H35V3z" fill="#b8b8b8"/><rect x="5.500" y="5.500" width="27" height="27" fill="none" stroke="#111"/></g>
<g id="O"><rect width="38" height="38" fill="#fcc24e"/><path d="M0 38V0H38L35 3H3V35z" fill="#ffe6a8"/><path d="M38 0V38H0L3 35H35V3z" fill="#8a7038"/><rect x="5.500" y="5.500" width="27" height="27" fill="none" stroke="#111"/></g>
<g id="iU"><rect x="12" y="15" width="14" height="14" fill="none" stroke="#000" stroke-width="3"/><path d="M19 7l6 6h-3v7h-6v-7h-3z"/></g>
<g id="iD"><rect x="12" y="10" width="14" height="14" fill="none" stroke="#000" stroke-width="3"/><path d="M19 32l-6-6h3v-7h6v7h3z"/></g>
<g id="iL"><rect x="14" y="12" width="14" height="14" fill="none" stroke="#000" stroke-width="3"/><path d="M7 19l6-6v3h7v6h-7v3z"/></g>
<g id="iR"><rect x="10" y="12" width="14" height="14" fill="none" stroke="#000" stroke-width="3"/><path d="M31 19l-6-6v3h-7v6h7v3z"/></g>
<g id="iF"><rect x="12" y="12" width="14" height="14" fill="none" stroke="#000" stroke-width="3"/><path d="M14 6h10l-5 4zM14 32h10l-5-4zM6 14v10l4-5zM32 14v10l-4-5z"/></g>
<g id="iM"><rect x="15.500" y="15.500" width="7" height="7" fill="none" stroke="#000" stroke-width="2"/><path d="M14 13l5-6 5 6zM14 25l5 6 5-6zM13 14l-6 5 6 5zM25 14l6 5-6 5z"/></g>
</defs>
<g transform="translate(1757,78)">
<rect width="101" height="412" fill="#000"/><rect width="2" height="412" fill="#5f8f8f"/><rect y="162" width="101" height="3" fill="#7fb0ae"/><rect y="405" width="101" height="4" fill="#7fa8a6"/>
<use href="#T" x="2" y="3"/><use href="#iU" x="2" y="3"/><use href="#T" x="42" y="3"/><use href="#iD" x="42" y="3"/><use href="#T" x="82" y="3"/>
<path d="M90 24l9-9 9 9M92 24v10h10v-10" fill="none" stroke="#000"/><rect x="95" y="26" width="4" height="4" fill="none" stroke="#000"/>
<use href="#T" x="2" y="43"/><use href="#iL" x="2" y="43"/><use href="#T" x="42" y="43"/><use href="#iR" x="42" y="43"/><use href="#T" x="82" y="43"/>
<path d="M90 58h8v14h-6M93 55l-4 3 4 3" fill="none" stroke="#000" stroke-width="2.500"/>
<use href="#T" x="2" y="83"/><use href="#iF" x="2" y="83"/><use href="#T" x="42" y="83"/><use href="#iM" x="42" y="83"/><use href="#T" x="82" y="83"/>
<text x="90" y="108" font-family="Liberation Sans" font-weight="bold" font-size="14">1:1</text>
<use href="#T" x="2" y="123"/><path d="M11 135h12m3-3a3 3 0 100 6h5M11 143h18v4H11l-2-2z" fill="none" stroke="#000" stroke-width="2"/><path d="M15 153a8 6 0 0118-3c0 5-4 9-10 9s-8-2-8-6z" fill="none" stroke="#000"/>
<use href="#T" x="42" y="123"/><path d="M49 139h24M49 148h24M56 130v25M66 130v25" stroke="#b0b8b8" fill="none"/>
<rect x="82" y="123" width="38" height="38" fill="#a82020"/><rect x="86" y="127" width="30" height="30" fill="#9cd9d9"/><circle cx="92" cy="143" r="3.500" fill="#e01010"/><circle cx="99" cy="132" r="3.500" fill="#1020e0"/><circle cx="99" cy="152" r="3.500" fill="#1020e0"/><path d="M92 143h7V132M92 143v9h7" stroke="#1020e0" fill="none"/>
<use href="#W" x="2" y="167"/><circle cx="21" cy="189" r="7" fill="#111"/><path d="M27 182l7-7M29 175h5v5" stroke="#111" stroke-width="2" fill="none"/>
<use href="#G" x="42" y="167"/><rect x="44" y="169" width="34" height="34" fill="#000"/><rect x="66" y="173" width="11" height="14" fill="#000" stroke="#e01010" stroke-width="2.500"/><rect x="50" y="193" width="7" height="7" fill="#000" stroke="#1020e0" stroke-width="2"/><path d="M57 193l10-20M58 200l19-12" stroke="#fff"/><path d="M42 167h38v2H44v36h-2z" fill="#fff"/>
<use href="#W" x="82" y="167"/><path d="M90 187h12v6H90z M90 184v3M93 184v3M96 184v3M99 184v3" fill="#111" stroke="#111"/>
<use href="#G" x="2" y="207"/><path d="M12 215v14h16" stroke="#1414e0" stroke-width="4" fill="none"/><circle cx="12" cy="215" r="4.500" fill="#1414e0"/><circle cx="12" cy="230" r="4.500" fill="#1414e0"/><circle cx="27" cy="230" r="4.500" fill="#1414e0"/><circle cx="27" cy="215" r="4.500" fill="#e01010"/>
<use href="#G" x="42" y="207"/><path d="M54 219l14 14M68 219l-14 14" stroke="#000" stroke-width="1.500"/><circle cx="61" cy="226" r="4" fill="#1818a0"/>
<use href="#G" x="82" y="207"/><circle cx="92" cy="232" r="3.500" fill="none" stroke="#1414e0" stroke-width="2"/><path d="M96 226l4-3" stroke="#000"/>
<use href="#G" x="2" y="247"/><path d="M10 280L26 258" stroke="#e01010" stroke-width="2.500"/><path d="M10 281H30" stroke="#1414e0" stroke-width="2.500"/><path d="M24 272l4 3" stroke="#000"/>
<use href="#G" x="42" y="247"/><path d="M51 280L59 270" stroke="#1414e0" stroke-width="2.500"/><path d="M59 270L68 258" stroke="#e01010" stroke-width="2.500"/><path d="M61 275l4-4" stroke="#000"/>
<use href="#G" x="82" y="247"/><path d="M96 258v6M92 273h8" stroke="#000" stroke-width="2"/>
<use href="#G" x="2" y="287"/><rect x="25" y="295" width="10" height="11" fill="#e01010"/><rect x="28" y="298" width="4" height="5" fill="#fff"/><rect x="9" y="312" width="11" height="12" fill="none" stroke="#1414e0"/><circle cx="14.500" cy="318" r="3.500" fill="#1414e0"/>
<use href="#G" x="42" y="287"/><path d="M50 306H72" stroke="#e01010" stroke-width="2.500"/><path d="M57 306H65" stroke="#1414e0" stroke-width="3"/>
<use href="#G" x="82" y="287"/><path d="M92 296v22M97 307h-4" stroke="#1414c0" fill="none"/><rect x="96" y="302" width="7" height="9" fill="none" stroke="#1414c0"/>
<use href="#G" x="2" y="327"/><path d="M10 352L21 338l11 14z" fill="none" stroke="#e01010" stroke-width="2"/><path d="M8 354H33" stroke="#1414e0" stroke-width="2.500"/><path d="M21 344v5" stroke="#000"/>
<use href="#G" x="42" y="327"/><path d="M49 358L61 334l12 24" fill="none" stroke="#e01010" stroke-width="2"/><path d="M50 360L61 350l11 10" fill="none" stroke="#1414e0" stroke-width="2"/><path d="M61 338v9" stroke="#000"/>
<use href="#G" x="82" y="327"/><path d="M90 351L98 335h6" fill="none" stroke="#e01010" stroke-width="2"/><path d="M88 355H106" stroke="#1414e0" stroke-width="2.500"/>
<use href="#O" x="2" y="367"/><path d="M17 376l1 16 3-4 4 7 2-1-4-7 5-1z" fill="#000"/>
<use href="#O" x="42" y="367"/><rect x="49" y="374" width="24" height="24" fill="none" stroke="#d01010" stroke-width="2.500"/><path d="M57 378l1 15 3-4 4 7 2-1-4-7 5-1z" fill="#000"/>
<use href="#O" x="82" y="367"/><path d="M90 378l6-4h8v24h-8l-6-4z" fill="none" stroke="#d01010" stroke-width="2.500"/><path d="M98 378l1 15 3-4 3 5 1-1-3-6 4-1z" fill="#000"/>
</g>
<path d="M1756.500 78V572" stroke="#4f7f7f"/>

<g transform="translate(1615,161) scale(.87)"><use href="#T"/><rect x="11" y="15" width="11" height="11" fill="none" stroke="#000" stroke-width="2"/><rect x="22" y="8" width="8" height="8" fill="none" stroke="#000"/><path d="M13 20h6M16 17l-3 3 3 3" stroke="#000" fill="none"/></g>
<g transform="translate(1615,196) scale(.87)"><use href="#T"/><use href="#iU"/></g>
<g transform="translate(1615,231) scale(.87)"><use href="#T"/><use href="#iD"/></g>
<g transform="translate(1615,266) scale(.87)"><use href="#T"/><use href="#iL"/></g>
<g transform="translate(1615,301) scale(.87)"><use href="#T"/><use href="#iR"/></g>
<g transform="translate(1615,336) scale(.87)"><use href="#T"/><use href="#iF"/></g>
<g transform="translate(1615,371) scale(.87)"><use href="#T"/><use href="#iM"/></g>

<g fill="none" stroke="#9ce8d4">
<rect x="266.500" y="232.500" width="11" height="568" stroke="#2a8a70"/><rect x="268.500" y="248.500" width="7" height="536"/>
<path d="M267 245l5.500-11 5.500 11z" stroke="#9ce8d4"/><path d="M267 788l5.500 11 5.500-11z" stroke="#2a8a70"/>
<rect x="589.500" y="233.500" width="12" height="505" stroke="#2a8a70"/><rect x="591.500" y="249.500" width="8" height="470"/>
<path d="M590 246l6-12 6 12z"/><path d="M590 722l6 13 6-13z" stroke="#2a8a70"/>
<rect x="111" y="806.500" width="148" height="13" stroke="#2a8a70"/><rect x="125.500" y="808.500" width="120" height="9"/>
<path d="M123 808l-11 5.500 11 5.500z"/><path d="M247 808l11 5.500-11 5.500z" stroke="#2a8a70"/>
<path d="M295 747l-11 5 11 5z"/><path d="M572 747l11 5-11 5z" stroke="#2a8a70"/>
</g>
<g font-family="Liberation Serif" font-size="11.500" fill="#012" text-anchor="middle">
<g transform="translate(499,822)"><rect width="30" height="29" fill="#52cdac"/><path d="M0 29V0H30L28 2H2V27z" fill="#9ce8d4"/><path d="M30 0V29H0L2 27H28V2z" fill="#2a8a70"/><rect x="4.500" y="4.500" width="21" height="20" fill="none" stroke="#123"/><text x="15" y="13">DEL</text><circle cx="15" cy="19" r="3" fill="#e01010" stroke="none"/></g>
<g transform="translate(533,822)"><rect width="30" height="29" fill="#52cdac"/><path d="M0 29V0H30L28 2H2V27z" fill="#9ce8d4"/><path d="M30 0V29H0L2 27H28V2z" fill="#2a8a70"/><rect x="4.500" y="4.500" width="21" height="20" fill="none" stroke="#123"/><text x="15" y="13">REF</text><circle cx="15" cy="19" r="3" fill="#10c010" stroke="none"/></g>
<g transform="translate(567,822)"><rect width="34" height="29" fill="#52cdac"/><path d="M0 29V0H34L32 2H2V27z" fill="#9ce8d4"/><path d="M34 0V29H0L2 27H32V2z" fill="#2a8a70"/><rect x="4.500" y="4.500" width="25" height="20" fill="none" stroke="#123"/><text x="17" y="13" font-size="10.500">UNDO</text><path d="M14 17c4-2 8 0 6 4l-3 2" stroke="#d8c020" stroke-width="2" fill="none"/></g>
<g transform="translate(1452,861)"><rect width="30" height="28" fill="#9cd9d9"/><path d="M0 28V0H30L28 2H2V26z" fill="#d4f6f6"/><path d="M30 0V28H0L2 26H28V2z" fill="#568a88"/><rect x="4.500" y="4.500" width="21" height="19" fill="none" stroke="#123"/><text x="15" y="13">DEL</text><circle cx="15" cy="19" r="3" fill="#e01010" stroke="none"/></g>
<g transform="translate(1487,861)"><rect width="30" height="28" fill="#9cd9d9"/><path d="M0 28V0H30L28 2H2V26z" fill="#d4f6f6"/><path d="M30 0V28H0L2 26H28V2z" fill="#568a88"/><rect x="4.500" y="4.500" width="21" height="19" fill="none" stroke="#123"/><text x="15" y="13">REF</text><circle cx="15" cy="19" r="3" fill="#10c010" stroke="none"/></g>
</g>
<g transform="translate(403,899) scale(.76)"><use href="#T"/><rect x="6" y="6" width="26" height="26" fill="#9cd9d9"/><path d="M19 6h13v20H19z" fill="#f8f020"/><path d="M6 32v-5h6V12h3V6h4v26zM19 26h13v6H19z" fill="#000"/><circle cx="26" cy="11" r="1.500"/><circle cx="13" cy="11" r="1.500"/></g>
<g transform="translate(437,899) scale(.76)"><use href="#T"/><rect x="9" y="9" width="20" height="14" fill="#e01010" stroke="#000"/><circle cx="16" cy="17" r="3" fill="#000"/><path d="M22 11v10M16 17h6" stroke="#000" stroke-width="2"/><path d="M9 26h20M9 29h20" stroke="#000"/></g>
<g transform="translate(470,899) scale(.76)"><use href="#T"/><text x="19" y="24" font-family="Liberation Serif" font-size="13" text-anchor="middle" fill="#222">REF</text><path d="M8 9l22 22M30 9L8 31" stroke="#d02020" stroke-width="2.500"/></g>
<g transform="translate(505,899) scale(.76)"><use href="#T"/><path d="M9 8h20v17l-5 5H9z" fill="#18e018" stroke="#000"/><text x="19" y="25" font-family="Liberation Sans" font-weight="bold" font-size="14" text-anchor="middle" fill="#000">12</text></g>
<g transform="translate(539,899) scale(.76)"><use href="#T"/><path d="M9 8h20v17l-5 5H9z" fill="#f8f020" stroke="#000"/><path d="M12 13h14M12 17h12M12 21h14M12 25h9" stroke="#000"/></g>
<g transform="translate(573,899) scale(.76)"><rect width="38" height="38" fill="#e01010"/><rect x="4" y="4" width="30" height="30" fill="#9cd9d9"/><rect x="9" y="18" width="4" height="12" fill="#d02020"/><rect x="14" y="13" width="4" height="17" fill="#10a010"/><rect x="19" y="8" width="4" height="22" fill="#8020d0"/><rect x="24" y="18" width="4" height="12" fill="#2040e0"/><rect x="29" y="20" width="3" height="10" fill="#20d0e0"/><path d="M7 30.500H33" stroke="#000"/></g>
<g stroke-width="2">
<path d="M1456 620l7-7 7 7-7 7z" fill="#9cd9d9" stroke="#6f9f9f"/><path d="M1456 647l7-7 7 7-7 7z" fill="#9cd9d9" stroke="#6f9f9f"/><path d="M1456 675l7-7 7 7-7 7z" fill="#9cd9d9" stroke="#6f9f9f"/><path d="M1456 702l7-7 7 7-7 7z" fill="#d00850" stroke="#d4f6f6"/><path d="M1456 729l7-7 7 7-7 7z" fill="#9cd9d9" stroke="#6f9f9f"/>
</g>
<g fill="none" stroke="#c8f0f0">
<path d="M1531 744.500V856H1451"/>
<rect x="1538.500" y="757.500" width="9" height="85" stroke="#6f9f9f"/><path d="M1537 755l6-10 6 10z" stroke="#6f9f9f"/><path d="M1537 846l6 10 6-10z" stroke="#6f9f9f"/>
<path d="M1570 812v13l-12-6.500z" stroke="#6f9f9f"/>
<rect x="1647" y="829" width="4" height="60" fill="#c8f0f0" stroke="none"/><rect x="1653.500" y="843.500" width="10" height="29" stroke="#6f9f9f"/><path d="M1652 841l6.500-11 6.500 11z" stroke="#6f9f9f"/><path d="M1652 875l6.500 11 6.500-11z" stroke="#6f9f9f"/><path d="M1667 827V890" stroke="#000" stroke-width="2"/>
</g>
</svg>
</body></html>
